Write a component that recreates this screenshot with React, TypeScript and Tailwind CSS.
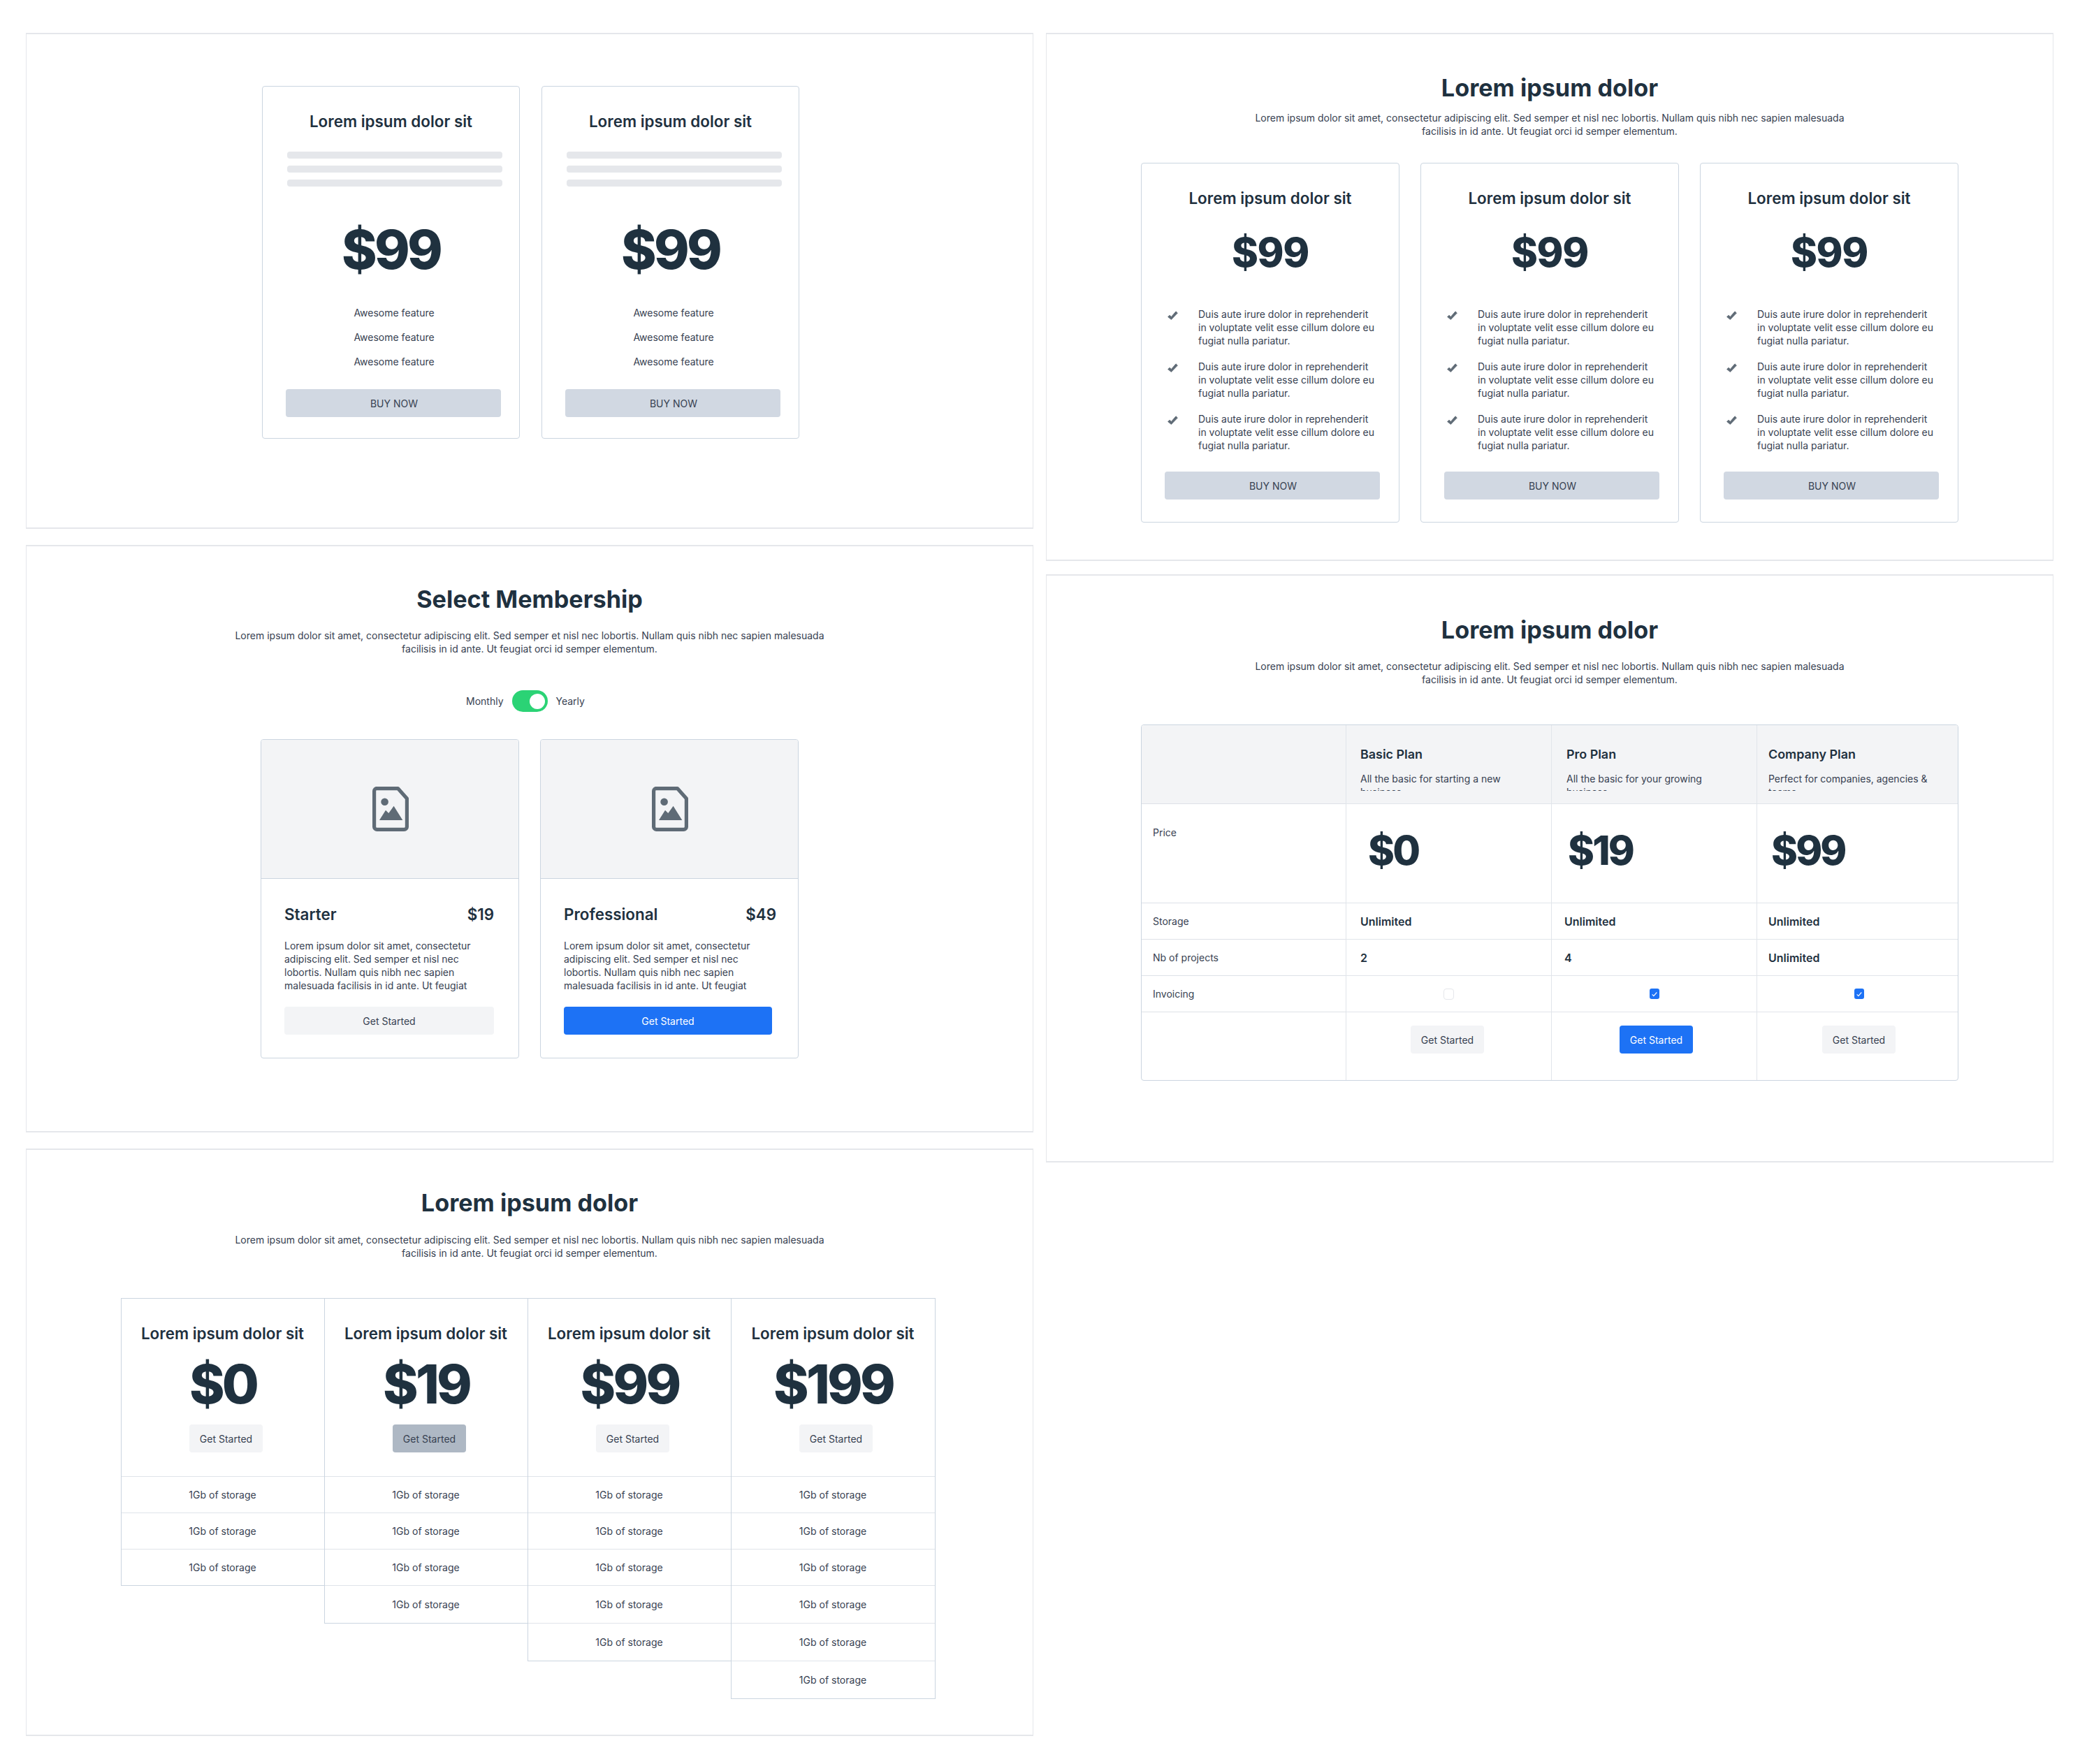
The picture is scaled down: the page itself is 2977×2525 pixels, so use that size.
import { Fragment } from "react";

const lorem =
  "Lorem ipsum dolor sit amet, consectetur adipiscing elit. Sed semper et nisl nec lobortis. Nullam quis nibh nec sapien malesuada facilisis in id ante. Ut feugiat orci id semper elementum.";

function Panel({ className, children }: { className: string; children: React.ReactNode }) {
  return (
    <section className={"border-x border-y-2 border-[#e5e7eb] " + className}>{children}</section>
  );
}

function Heading({ title, gap }: { title: string; gap: string }) {
  return (
    <div className="flex flex-col items-center">
      <h2 className="text-[34.2px] leading-[40px] font-bold text-[#1f313f]">{title}</h2>
      <p className={"w-[860px] text-center text-[14px] leading-[19px] text-[#374151] " + gap}>{lorem}</p>
    </div>
  );
}

function CheckIcon() {
  return (
    <svg viewBox="0 0 15 13" className="ml-[37px] mt-[5px] w-[15px] h-[13px] shrink-0 text-[#5f6b76]" fill="currentColor">
      <path
        d="M.6 8.6l2.4-2.4 2.4 2.2L12 .8l2.4 2.3L5.4 12.4z"
        stroke="currentColor"
        strokeWidth="0.8"
        strokeLinejoin="round"
      />
    </svg>
  );
}

function FirstCard() {
  return (
    <div className="w-[369px] h-[505px] rounded border border-[#cbd5e0] pt-[36px]">
      <h3 className="text-center text-[22.4px] leading-[28px] font-semibold text-[#1f313f]">Lorem ipsum dolor sit</h3>
      <div className="mt-[29px] ml-[35px] w-[308px] flex flex-col gap-[10px]">
        <div className="h-[10px] rounded bg-[#e5e7eb]" />
        <div className="h-[10px] rounded bg-[#e5e7eb]" />
        <div className="h-[10px] rounded bg-[#e5e7eb]" />
      </div>
      <div className="mt-[46px] text-center text-[76.8px] leading-[90px] font-extrabold tracking-[-0.05em] text-[#1f313f]">$99</div>
      <ul className="mt-[27px] pl-[9px] text-center text-[14px] leading-[35px] text-[#374151]">
        <li>Awesome feature</li>
        <li>Awesome feature</li>
        <li>Awesome feature</li>
      </ul>
      <button className="mt-[22px] ml-[33px] pl-[2px] w-[308px] h-[40px] rounded bg-[#d1d8e2] text-[14px] text-[#374151]">BUY NOW</button>
    </div>
  );
}

function CheckCard() {
  return (
    <div className="w-[370px] h-[515px] rounded border border-[#cbd5e0] pt-[36px]">
      <h3 className="text-center text-[22.4px] leading-[28px] font-semibold text-[#1f313f]">Lorem ipsum dolor sit</h3>
      <div className="mt-[28px] text-center text-[57.6px] leading-[70px] font-extrabold tracking-[-0.025em] text-[#1f313f]">$99</div>
      <ul className="mt-[44px] flex flex-col gap-[18px]">
        {[0, 1, 2].map((i) => (
          <li key={i} className="flex">
            <CheckIcon />
            <p className="ml-[29px] w-[258px] text-[14px] leading-[19px] text-[#374151]">
              Duis aute irure dolor in reprehenderit in voluptate velit esse cillum dolore eu fugiat nulla pariatur.
            </p>
          </li>
        ))}
      </ul>
      <button className="mt-[28px] ml-[33px] pl-[2px] w-[308px] h-[40px] rounded bg-[#d1d8e2] text-[14px] text-[#374151]">BUY NOW</button>
    </div>
  );
}

function FileImageIcon() {
  return (
    <svg viewBox="0 0 52 64" className="ml-[1px] w-[52px] h-[64px] text-[#5f6b76]" fill="none">
      <path
        d="M6.4 2.6H36.5L49.4 17V57.4a4 4 0 0 1-4 4H6.6a4 4 0 0 1-4-4V6.4a4 4 0 0 1 4-4z"
        stroke="currentColor"
        strokeWidth="5.2"
        strokeLinejoin="round"
      />
      <circle cx="17.6" cy="21.7" r="5.3" fill="currentColor" />
      <path d="M10 48L19 33.7 23.3 38 30.6 27.7 43.3 48z" fill="currentColor" />
    </svg>
  );
}

function PlanCard({ name, price, primary }: { name: string; price: string; primary?: boolean }) {
  return (
    <div className="w-[370px] h-[457px] rounded border border-[#cbd5e0] overflow-hidden">
      <div className="h-[199px] bg-[#f3f4f6] border-b border-[#cbd5e0] flex items-center justify-center">
        <FileImageIcon />
      </div>
      <div className="pt-[37px] pl-[33px]">
        <div className={"flex justify-between text-[22.4px] leading-[28px] font-semibold text-[#1f313f] " + (primary ? "w-[304px]" : "w-[300px]")}>
          <span>{name}</span>
          <span>{price}</span>
        </div>
        <p className="mt-[21px] w-[285px] h-[76px] overflow-hidden text-[14px] leading-[19px] text-[#374151]">{lorem}</p>
        <button
          className={
            "mt-[21px] h-[40px] rounded text-[14px] " +
            (primary ? "w-[298px] bg-[#1d72f5] text-white" : "w-[300px] bg-[#f3f4f6] text-[#374151]")
          }
        >
          Get Started
        </button>
      </div>
    </div>
  );
}

const tableCols = [
  { name: "Basic Plan", sub: "All the basic for starting a new business", price: "$0", storage: "Unlimited", projects: "2", invoicing: false, primary: false, head: "pl-[20px]", value: "pl-[20px]", priceMargin: "ml-[31px]", btn: "ml-[92px]", box: "" },
  { name: "Pro Plan", sub: "All the basic for your growing business", price: "$19", storage: "Unlimited", projects: "4", invoicing: true, primary: true, head: "pl-[21px]", value: "pl-[18px]", priceMargin: "ml-[23px]", btn: "ml-[97px]", box: "" },
  { name: "Company Plan", sub: "Perfect for companies, agencies & teams", price: "$99", storage: "Unlimited", projects: "Unlimited", invoicing: true, primary: false, head: "pl-[16px]", value: "pl-[16px]", priceMargin: "ml-[20px]", btn: "ml-[93px]", box: "ml-[5px]" },
];

function Box({ checked, className }: { checked: boolean; className: string }) {
  return checked ? (
    <span className={"w-[14px] h-[15px] rounded-[3px] bg-[#1d72f5] flex items-center justify-center " + className}>
      <svg viewBox="0 0 12 12" className="w-[10px] h-[10px]" fill="none" stroke="white" strokeWidth="1.4">
        <path d="M2 6.5l2.6 2.6L10 3" />
      </svg>
    </span>
  ) : (
    <span className={"w-[15px] h-[16px] rounded-[4px] border border-[#e5e7eb] bg-white " + className} />
  );
}

function CompareTable() {
  const cell = "border-l border-[#e1e5ea]";
  const row = "border-t border-[#dde1e7]";
  return (
    <div className="w-[1170px] h-[510px] rounded border border-[#cbd5e0] overflow-hidden grid grid-cols-[292px_294px_294px_1fr] grid-rows-[112px_142px_52px_52px_52px_1fr] text-[#1f313f]">
      <div className="bg-[#f3f4f6]" />
      {tableCols.map((c) => (
        <div key={c.name} className={"bg-[#f3f4f6] pt-[28px] " + cell + " " + c.head}>
          <div className="text-[17.9px] leading-[28px] font-semibold">{c.name}</div>
          <p className="mt-[11px] w-[240px] h-[27px] overflow-hidden text-[14px] leading-[19px] text-[#374151]">{c.sub}</p>
        </div>
      ))}

      <div className={row + " pl-[16px] pt-[31px] text-[14px] leading-[19px] text-[#374151]"}>Price</div>
      {tableCols.map((c) => (
        <div key={c.name} className={row + " " + cell + " pt-[31px]"}>
          <div className={"text-[57.6px] leading-[70px] font-extrabold tracking-[-0.05em] " + c.priceMargin}>{c.price}</div>
        </div>
      ))}

      {[
        { label: "Storage", key: "storage" as const },
        { label: "Nb of projects", key: "projects" as const },
      ].map((r) => (
        <Fragment key={r.label}>
          <div className={row + " pl-[16px] flex items-center text-[14px] text-[#374151]"}>{r.label}</div>
          {tableCols.map((c) => (
            <div key={c.name} className={row + " " + cell + " flex items-center text-[16px] font-semibold " + c.value}>
              {c[r.key]}
            </div>
          ))}
        </Fragment>
      ))}

      <div className={row + " pl-[16px] flex items-center text-[14px] text-[#374151]"}>Invoicing</div>
      {tableCols.map((c) => (
        <div key={c.name} className={row + " " + cell + " flex items-center justify-center"}>
          <Box checked={c.invoicing} className={c.box} />
        </div>
      ))}

      <div className={row} />
      {tableCols.map((c) => (
        <div key={c.name} className={row + " " + cell + " pt-[19px]"}>
          <button
            className={
              "w-[105px] h-[40px] rounded text-[14px] " + c.btn + " " +
              (c.primary ? "bg-[#1d72f5] text-white" : "bg-[#f3f4f6] text-[#374151]")
            }
          >
            Get Started
          </button>
        </div>
      ))}
    </div>
  );
}

const tierCols = [
  { price: "$0", rows: [52, 52, 52], btn: "bg-[#f3f4f6]" },
  { price: "$19", rows: [52, 52, 52, 54], btn: "bg-[#aeb8c4]" },
  { price: "$99", rows: [52, 52, 52, 54, 54], btn: "bg-[#f3f4f6]" },
  { price: "$199", rows: [52, 52, 52, 54, 54, 54], btn: "bg-[#f3f4f6]" },
];

function TierColumn({ price, rows, btn }: { price: string; rows: number[]; btn: string }) {
  return (
    <div className="w-[291px] border-y border-l border-[#cbd5e0] pr-[1px] last:w-[293px] last:border-r">
      <div className="h-[254px] pt-[36px]">
        <h3 className="text-center text-[22.4px] leading-[28px] font-semibold text-[#1f313f]">Lorem ipsum dolor sit</h3>
        <div className="mt-[14px] pl-[1px] text-center text-[76.8px] leading-[90px] font-extrabold tracking-[-0.05em] text-[#1f313f]">{price}</div>
        <button className={"mt-[12px] ml-[97px] block w-[105px] h-[40px] rounded text-[14px] text-[#374151] " + btn}>Get Started</button>
      </div>
      {rows.map((h, i) => (
        <div
          key={i}
          className={"border-t border-[#e0e4ea] -mr-[1px] pr-[1px] text-center text-[14px] text-[#374151] flex items-center justify-center " + (h === 52 ? "h-[52px]" : "h-[54px]")}
        >
          1Gb of storage
        </div>
      ))}
    </div>
  );
}

export default function App() {
  return (
    <div className="w-[2977px] h-[2525px] bg-white flex gap-[18px] pl-[37px] pt-[47px] font-['Inter',sans-serif]">
      <div className="w-[1442px] flex flex-col gap-[23px]">
        <Panel className="h-[710px] pt-[74px] pl-[337px]">
          <div className="flex gap-[31px]">
            <FirstCard />
            <FirstCard />
          </div>
        </Panel>

        <Panel className="h-[841px] pt-[56px]">
          <Heading title="Select Membership" gap="mt-[22px]" />
          <div className="mt-[50px] ml-[629px] flex items-center text-[14px] text-[#374151]">
            <span>Monthly</span>
            <span className="ml-[12px] mr-[12px] w-[51px] h-[31px] rounded-full bg-[#2bd375] flex items-center justify-end pr-[4px]">
              <span className="w-[22px] h-[22px] rounded-full bg-white" />
            </span>
            <span>Yearly</span>
          </div>
          <div className="mt-[39px] pl-[335px] flex gap-[30px]">
            <PlanCard name="Starter" price="$19" />
            <PlanCard name="Professional" price="$49" primary />
          </div>
        </Panel>

        <Panel className="h-[841px] pt-[56px]">
          <Heading title="Lorem ipsum dolor" gap="mt-[23px]" />
          <div className="mt-[55px] ml-[135px] flex items-start">
            {tierCols.map((c) => (
              <TierColumn key={c.price} price={c.price} rows={c.rows} btn={c.btn} />
            ))}
          </div>
        </Panel>
      </div>

      <div className="w-[1442px] flex flex-col gap-[19px]">
        <Panel className="h-[756px] pt-[57px]">
          <Heading title="Lorem ipsum dolor" gap="mt-[13px]" />
          <div className="mt-[36px] ml-[135px] flex gap-[30px]">
            <CheckCard />
            <CheckCard />
            <CheckCard />
          </div>
        </Panel>

        <Panel className="h-[842px] pt-[58px]">
          <Heading title="Lorem ipsum dolor" gap="mt-[22px]" />
          <div className="mt-[55px] ml-[135px]">
            <CompareTable />
          </div>
        </Panel>
      </div>
    </div>
  );
}
